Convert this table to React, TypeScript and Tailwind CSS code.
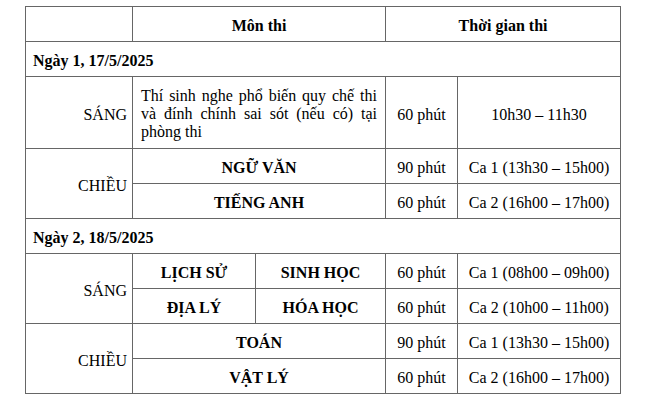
export default function App() {
  const cell = "border border-[#666] px-[6px] pt-[4px] align-middle font-['Liberation_Serif']";
  const subj = `${cell} text-center font-bold`;
  const mid = `${cell} text-center`;
  const side = `${cell} text-right pr-[5px]`;

  return (
    <div className="w-[645px] h-[406px] bg-white overflow-hidden text-black font-['Liberation_Serif'] text-[16px] leading-[18px]">
      <table className="ml-[25px] mt-[6px] border-collapse table-fixed w-[595px] font-['Liberation_Serif'] text-[16px] leading-[18px]">
        <colgroup>
          <col className="w-[107px]" />
          <col className="w-[123px]" />
          <col className="w-[130px]" />
          <col className="w-[72px]" />
          <col className="w-[163px]" />
        </colgroup>
        <tbody>
          <tr className="h-[35px]">
            <td className={cell}></td>
            <td colSpan={2} className={subj}>Môn thi</td>
            <td colSpan={2} className={subj}>Thời gian thi</td>
          </tr>
          <tr className="h-[35px]">
            <td colSpan={5} className={`${cell} font-bold pl-[7px]`}>Ngày 1, 17/5/2025</td>
          </tr>
          <tr className="h-[72px]">
            <td className={side}>SÁNG</td>
            <td colSpan={2} className="border border-[#666] align-middle text-justify px-[8px] pt-[2px] font-['Liberation_Serif']">
              Thí sinh nghe phổ biến quy chế thi và đính chính sai sót (nếu có) tại phòng thi
            </td>
            <td className={mid}>60 phút</td>
            <td className={mid}>10h30 – 11h30</td>
          </tr>
          <tr className="h-[35px]">
            <td rowSpan={2} className={side}>CHIỀU</td>
            <td colSpan={2} className={subj}>NGỮ VĂN</td>
            <td className={mid}>90 phút</td>
            <td className={mid}>Ca 1 (13h30 – 15h00)</td>
          </tr>
          <tr className="h-[35px]">
            <td colSpan={2} className={subj}>TIẾNG ANH</td>
            <td className={mid}>60 phút</td>
            <td className={mid}>Ca 2 (16h00 – 17h00)</td>
          </tr>
          <tr className="h-[35px]">
            <td colSpan={5} className={`${cell} font-bold pl-[7px]`}>Ngày 2, 18/5/2025</td>
          </tr>
          <tr className="h-[35px]">
            <td rowSpan={2} className={side}>SÁNG</td>
            <td className={subj}>LỊCH SỬ</td>
            <td className={subj}>SINH HỌC</td>
            <td className={mid}>60 phút</td>
            <td className={mid}>Ca 1 (08h00 – 09h00)</td>
          </tr>
          <tr className="h-[35px]">
            <td className={subj}>ĐỊA LÝ</td>
            <td className={subj}>HÓA HỌC</td>
            <td className={mid}>60 phút</td>
            <td className={mid}>Ca 2 (10h00 – 11h00)</td>
          </tr>
          <tr className="h-[35px]">
            <td rowSpan={2} className={side}>CHIỀU</td>
            <td colSpan={2} className={subj}>TOÁN</td>
            <td className={mid}>90 phút</td>
            <td className={mid}>Ca 1 (13h30 – 15h00)</td>
          </tr>
          <tr className="h-[35px]">
            <td colSpan={2} className={subj}>VẬT LÝ</td>
            <td className={mid}>60 phút</td>
            <td className={mid}>Ca 2 (16h00 – 17h00)</td>
          </tr>
        </tbody>
      </table>
    </div>
  );
}
